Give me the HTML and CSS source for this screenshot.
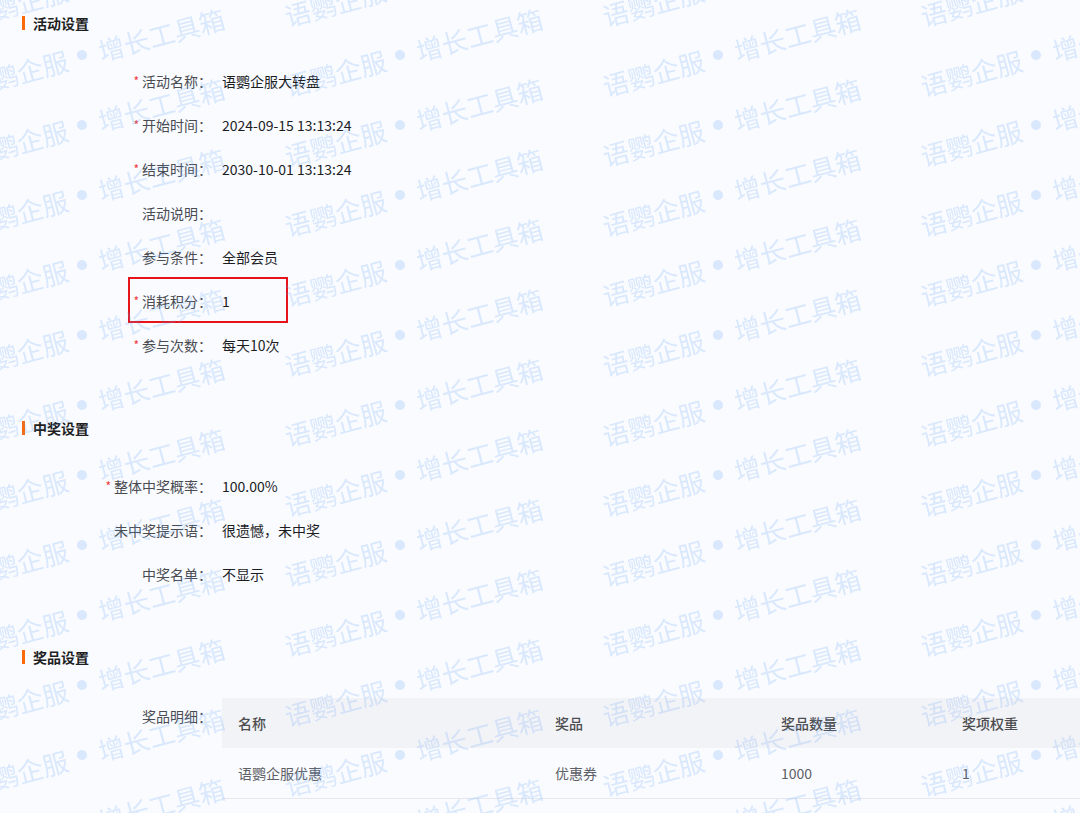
FILE: index.html
```html
<!DOCTYPE html>
<html>
<head>
  <meta charset="utf-8">
  <title>活动详情</title>
  <link rel="stylesheet" href="styles.css">
</head>
<body>
  <div class="page">
    <section class="block">
      <div class="block-title">活动设置</div>
      <div class="form">
        <div class="form-item"><span class="label required">活动名称：</span><span class="value">语鹦企服大转盘</span></div>
        <div class="form-item"><span class="label required">开始时间：</span><span class="value">2024-09-15 13:13:24</span></div>
        <div class="form-item"><span class="label required">结束时间：</span><span class="value">2030-10-01 13:13:24</span></div>
        <div class="form-item"><span class="label">活动说明：</span><span class="value"></span></div>
        <div class="form-item"><span class="label">参与条件：</span><span class="value">全部会员</span></div>
        <div class="form-item marked">
          <span class="label required">消耗积分：</span><span class="value">1</span>
          <div class="mark-box"></div>
        </div>
        <div class="form-item"><span class="label required">参与次数：</span><span class="value">每天10次</span></div>
      </div>
    </section>

    <section class="block">
      <div class="block-title">中奖设置</div>
      <div class="form">
        <div class="form-item"><span class="label required">整体中奖概率：</span><span class="value">100.00%</span></div>
        <div class="form-item"><span class="label">未中奖提示语：</span><span class="value">很遗憾，未中奖</span></div>
        <div class="form-item"><span class="label">中奖名单：</span><span class="value">不显示</span></div>
      </div>
    </section>

    <section class="block">
      <div class="block-title">奖品设置</div>
      <div class="form">
        <div class="form-item top">
          <span class="label">奖品明细：</span>
          <table class="prize-table">
            <colgroup>
              <col style="width: 317px">
              <col style="width: 226px">
              <col style="width: 181px">
              <col>
            </colgroup>
            <thead>
              <tr><th>名称</th><th>奖品</th><th>奖品数量</th><th>奖项权重</th></tr>
            </thead>
            <tbody>
              <tr><td>语鹦企服优惠</td><td>优惠券</td><td>1000</td><td>1</td></tr>
            </tbody>
          </table>
        </div>
      </div>
    </section>
  </div>

  <svg class="watermark" width="1080" height="813" aria-hidden="true">
    <defs>
      <g id="wm-item" transform="rotate(-15)">
        <text class="wm-text" x="-15" y="0" text-anchor="end" dominant-baseline="central">语鹦企服</text>
        <circle class="wm-dot" cx="0" cy="0" r="5"></circle>
        <text class="wm-text" x="17" y="0" text-anchor="start" dominant-baseline="central">增长工具箱</text>
      </g>
      <pattern id="wm-tile" patternUnits="userSpaceOnUse" x="82" y="55" width="318" height="70">
        <use href="#wm-item" x="0" y="-70"></use>
        <use href="#wm-item" x="318" y="-70"></use>
        <use href="#wm-item" x="0" y="0"></use>
        <use href="#wm-item" x="318" y="0"></use>
        <use href="#wm-item" x="0" y="70"></use>
        <use href="#wm-item" x="318" y="70"></use>
      </pattern>
    </defs>
    <rect width="1080" height="813" fill="url(#wm-tile)"></rect>
  </svg>
</body>
</html>
```

FILE: styles.css
```css
html, body {
  margin: 0;
  padding: 0;
}
body {
  font-family: "Noto Sans CJK SC", "Noto Sans", sans-serif;
  font-size: 14px;
  background: #f9fbff;
  color: #222;
  width: 1080px;
  height: 813px;
  overflow: hidden;
  position: relative;
}
.page {
  padding: 13px 0 0 22px;
}
.block + .block {
  margin-top: 55px;
}
.block-title {
  display: flex;
  align-items: center;
  height: 20px;
  line-height: 20px;
  font-weight: 600;
  color: #1f1f1f;
}
.block-title::before {
  content: "";
  width: 3px;
  height: 14px;
  background: #fa6a0a;
  margin-right: 8px;
}
.form {
  margin-top: 30px;
}
.form-item {
  display: flex;
  line-height: 36px;
  margin-bottom: 8px;
  position: relative;
}
.form-item.top {
  align-items: flex-start;
  padding-top: 1px;
}
.label {
  width: 190px;
  flex-shrink: 0;
  text-align: right;
  color: #4a4c52;
}
.label.required::before {
  content: "*";
  color: #f0353b;
  font-size: 12px;
  margin-right: 3px;
  vertical-align: 1px;
}
.value {
  margin-left: 10px;
  color: #1d1d1f;
}
.mark-box {
  position: absolute;
  left: 106px;
  top: -6px;
  width: 160px;
  height: 46px;
  box-sizing: border-box;
  border: 2px solid #e8141c;
}

/* prize table */
.prize-table {
  flex: 1;
  margin-left: 10px;
  border-collapse: collapse;
  table-layout: fixed;
  line-height: 20px;
}
.prize-table th,
.prize-table td {
  height: 50px;
  padding: 0 16px;
  text-align: left;
  box-sizing: border-box;
}
.prize-table th {
  background: #f2f3f7;
  font-weight: 500;
  color: #4d4d50;
}
.prize-table td {
  color: #5f6066;
  border-bottom: 1px solid #e6e8ee;
}

/* watermark over the page */
.watermark {
  position: absolute;
  left: 0;
  top: 0;
  pointer-events: none;
}
.wm-text {
  font-family: "Noto Sans CJK SC", sans-serif;
  font-size: 26px;
  fill: rgba(90, 155, 240, 0.2);
}
.wm-dot {
  fill: rgba(90, 155, 240, 0.2);
}
```
